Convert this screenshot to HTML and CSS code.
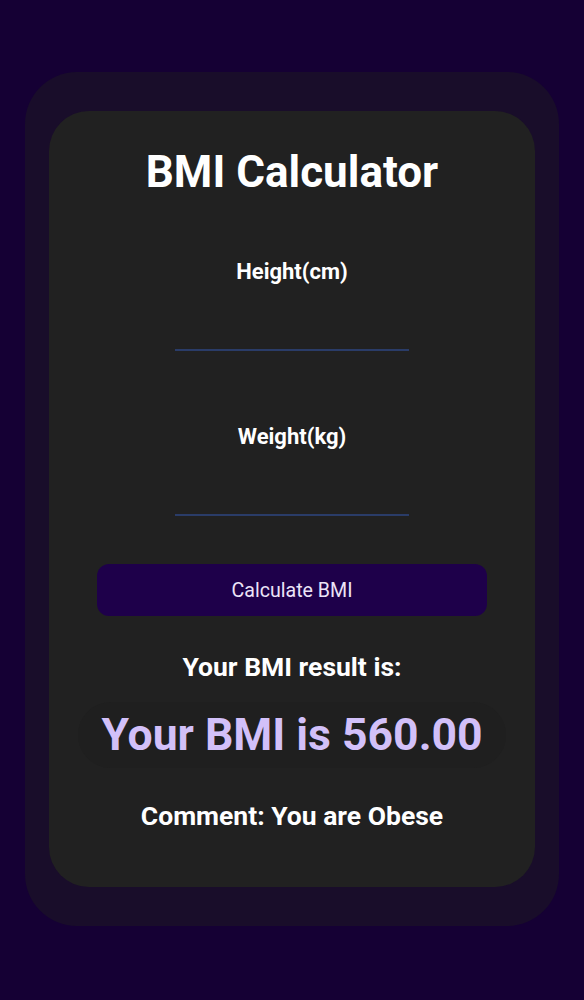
FILE: index.html
```html
<!DOCTYPE html>
<html lang="en">
<head>
<meta charset="utf-8">
<title>BMI Calculator</title>
<link rel="stylesheet" href="styles.css">
</head>
<body>
<div class="frame">
  <div class="card">
    <h1 class="title">BMI Calculator</h1>
    <div class="field field-first">
      <label class="label" for="h">Height(cm)</label>
      <input class="input" id="h" type="text">
    </div>
    <div class="field">
      <label class="label" for="w">Weight(kg)</label>
      <input class="input" id="w" type="text">
    </div>
    <button class="btn" type="button">Calculate BMI</button>
    <p class="result-head">Your BMI result is:</p>
    <div class="result"><span>Your BMI is 560.00</span></div>
    <p class="comment">Comment: You are Obese</p>
  </div>
</div>
</body>
</html>
```
FILE: styles.css
```css
* { box-sizing: border-box; }
html, body {
  margin: 0;
  padding: 0;
}
body {
  width: 584px;
  height: 1000px;
  background: #150034;
  font-family: Roboto, "Liberation Sans", sans-serif;
  color: #ffffff;
  overflow: hidden;
}
.frame {
  margin: 72px 0 0 25px;
  width: 534px;
  height: 854px;
  border-radius: 52px;
  background: #190d2a;
  padding: 39px 24px;
}
.card {
  height: 776px;
  border-radius: 40px;
  background: #212121;
  display: flex;
  flex-direction: column;
  align-items: center;
  padding-top: 35px;
}
.title {
  margin: 0;
  font-size: 44px;
  line-height: 52px;
  font-weight: 700;
}
.field {
  display: flex;
  flex-direction: column;
  align-items: center;
  width: 234px;
}
.field-first { margin-top: 61px; }
.field + .field { margin-top: 73px; }
.label {
  font-size: 22px;
  line-height: 26px;
  font-weight: 700;
}
.input {
  margin-top: 16px;
  width: 234px;
  height: 50px;
  background: transparent;
  border: none;
  border-bottom: 2px solid #2a3c68;
  outline: none;
  color: #fff;
  font: inherit;
}
.btn {
  margin-top: 48px;
  width: 390px;
  height: 52px;
  border: none;
  border-radius: 12px;
  background: #1e004a;
  color: #ece4f7;
  font-family: Roboto, "Liberation Sans", sans-serif;
  font-size: 19.6px;
}
.result-head {
  margin: 35px 0 0;
  font-size: 26.5px;
  line-height: 32px;
  font-weight: 700;
}
.result {
  margin-top: 19px;
  width: 428px;
  height: 66px;
  border-radius: 33px;
  background: #1f1f1f;
  display: flex;
  align-items: center;
  justify-content: center;
}
.result span {
  font-size: 44.5px;
  line-height: 52px;
  font-weight: 700;
  color: #d2c0f9;
}
.comment {
  margin: 32px 0 0;
  font-size: 26.5px;
  line-height: 32px;
  font-weight: 700;
}
```
